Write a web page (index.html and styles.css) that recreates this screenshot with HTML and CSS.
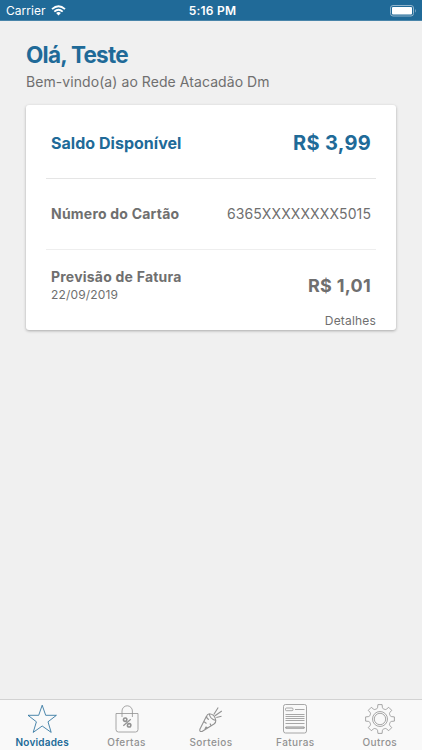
FILE: index.html
```html
<!DOCTYPE html>
<html lang="pt-BR">
<head>
<meta charset="utf-8">
<title>Rede Atacadão Dm</title>
<link rel="stylesheet" href="styles.css">
</head>
<body>
<header class="status">
  <div class="carrier"><span>Carrier</span>
    <svg width="15" height="11" viewBox="0 0 15 11" fill="none" stroke="#fff" stroke-width="1.9"><path d="M1 4.1Q7.5-1.5 14 4.1M3.3 6.6Q7.5 3 11.7 6.6"/><path d="M5.1 8.1Q7.5 6.1 9.9 8.1L7.5 10.6Z" fill="#fff" stroke="none"/></svg>
  </div>
  <span class="time">5:16 PM</span>
  <svg class="battery" width="27" height="12" viewBox="0 0 27 12"><rect x=".5" y=".5" width="23" height="10.5" rx="2.5" fill="none" stroke="#90b4cc"/><rect x="2" y="2" width="20" height="7.5" rx="1" fill="#fff"/><path d="M25 3.8q1.6 2 0 4z" fill="#90b4cc"/></svg>
</header>
<main>
  <h1>Olá, Teste</h1>
  <p class="welcome">Bem-vindo(a) ao Rede Atacadão Dm</p>
  <section class="card">
    <div class="row balance"><span class="balance-label">Saldo Disponível</span><span class="balance-value">R$ 3,99</span></div>
    <div class="row number"><span class="label">Número do Cartão</span><span class="card-number">6365XXXXXXXX5015</span></div>
    <div class="row invoice">
      <div><div class="label invoice-label">Previsão de Fatura</div><div class="date">22/09/2019</div></div>
      <span class="invoice-value">R$ 1,01</span>
    </div>
    <div class="details">Detalhes</div>
  </section>
</main>
<nav>
  <a class="tab active"><svg width="32" height="32" viewBox="0 0 32 32"><path d="M16.2 2.2L19.7 12.3H30.4L22 18.8L25.2 29.4L16.2 23L7.2 29.4L10.4 18.8L2 12.3H12.7Z"/></svg><span>Novidades</span></a>
  <a class="tab"><svg width="32" height="32" viewBox="0 0 32 32"><path d="M5 10.5h22v16a2.5 2.5 0 0 1-2.5 2.5H7.5a2.5 2.5 0 0 1-2.5-2.5ZM11 14V8a5.2 5.2 0 0 1 10.4 0V14"/><g transform="rotate(8 16 19.5)"><circle cx="13.8" cy="17" r="1.7" stroke-width="1.6"/><circle cx="18.5" cy="22" r="1.7" stroke-width="1.6"/><path d="M19.3 15.8L12.8 23.2" stroke-width="1.2"/></g></svg><span>Ofertas</span></a>
  <a class="tab"><svg width="32" height="32" viewBox="0 0 32 32"><path stroke-width="1.1" d="M14.3 10.8Q12.3 11 11.3 13.6L5 26Q4 29 7 28.5L19 21Q21 19.5 20.8 17.5M14.3 10.8Q14.8 16 20.8 17.5M14.3 10.8Q20 11.3 20.8 17.5M11.6 13Q11.6 16 14 16.5M8.8 18.5L11.5 20.5M9.8 26.6L11 24L13 25M16 22.8L15 20.5M18.8 11.5L23.2 4.5M20 12.8L26.8 8M21.3 14.5L26.5 13.3"/></svg><span>Sorteios</span></a>
  <a class="tab"><svg width="32" height="32" viewBox="0 0 32 32"><rect x="4.5" y="1.5" width="23" height="28.5" rx="2"/><rect x="6.5" y="5" width="7.5" height="2.7" rx="1"/><path d="M16 6.5h9.5M6.5 11.5h19M6.5 13.5h19M6.5 15.5h19M6.5 17.5h19M6.5 20.5h19"/><rect x="6.8" y="24" width="18.4" height="1.2" stroke-width="1"/></svg><span>Faturas</span></a>
  <a class="tab"><svg width="32" height="32" viewBox="-16 -16 32 32"><path d="M-3.4-10.2Q-2.5-10.5-2.4-11.5L-2.1-14.4H2.1L2.4-11.5Q2.5-10.5 3.4-10.2L4.8-9.6Q5.7-9.2 6.5-9.9L8.7-11.7L11.7-8.7L9.9-6.5Q9.2-5.7 9.6-4.8L10.2-3.4Q10.5-2.5 11.5-2.4L14.4-2.1V2.1L11.5 2.4Q10.5 2.5 10.2 3.4L9.6 4.8Q9.2 5.7 9.9 6.5L11.7 8.7L8.7 11.7L6.5 9.9Q5.7 9.2 4.8 9.6L3.4 10.2Q2.5 10.5 2.4 11.5L2.1 14.4H-2.1L-2.4 11.5Q-2.5 10.5-3.4 10.2L-4.8 9.6Q-5.7 9.2-6.5 9.9L-8.7 11.7L-11.7 8.7L-9.9 6.5Q-9.2 5.7-9.6 4.8L-10.2 3.4Q-10.5 2.5-11.5 2.4L-14.4 2.1V-2.1L-11.5-2.4Q-10.5-2.5-10.2-3.4L-9.6-4.8Q-9.2-5.7-9.9-6.5L-11.7-8.7L-8.7-11.7L-6.5-9.9Q-5.7-9.2-4.8-9.6Z"/><circle r="7.5"/><circle r="5.7"/></svg><span>Outros</span></a>
</nav>
</body>
</html>
```
FILE: styles.css
```css
* { box-sizing: border-box; }
body { margin: 0; height: 750px; display: flex; flex-direction: column; background: #f0f0f0; color: #6f6f6f; font-family: Inter, "Liberation Sans", sans-serif; overflow: hidden; white-space: nowrap; }
.status { height: 21px; flex: none; background: #206a98; border-bottom: 1px solid #4985aa; color: #fff; display: grid; grid-template-columns: 1fr auto 1fr; align-items: center; padding: 1px 5px 0 6px; line-height: 18px; }
.carrier { display: flex; align-items: center; gap: 5px; font-size: 12px; letter-spacing: .05px; }
.time { font-size: 12px; font-weight: 600; letter-spacing: .25px; padding-left: 2px; }
.battery { justify-self: end; }
main { flex: 1; padding: 20px 26px 0; }
h1 { margin: 0; font-size: 22.5px; line-height: 28px; font-weight: 700; letter-spacing: -.75px; color: #206a98; }
.welcome { margin: 2px 0 0; font-size: 14px; line-height: 22px; letter-spacing: .07px; }
.card { margin-top: 12px; height: 225px; padding: 0 20px; background: #fff; border-radius: 3px; box-shadow: 0 1px 3px rgba(0,0,0,.3); }
.row { display: flex; justify-content: space-between; align-items: center; padding: 0 5px; }
.balance { height: 74px; padding-top: 3px; border-bottom: 1px solid #e5e5e5; color: #206a98; }
.balance-label { font-size: 16px; font-weight: 700; letter-spacing: .03px; }
.balance-value { font-size: 20px; font-weight: 700; letter-spacing: .3px; }
.number { height: 71px; border-bottom: 1px solid #eee; padding-bottom: 1px; }
.label { font-size: 14px; font-weight: 700; letter-spacing: .22px; }
.card-number { font-size: 14px; letter-spacing: .1px; padding-bottom: 1px; }
.invoice { height: 60px; padding-top: 11px; }
.invoice-label { line-height: 18px; }
.date { font-size: 12px; line-height: 18px; letter-spacing: .15px; }
.invoice-value { font-size: 18px; font-weight: 700; letter-spacing: .3px; }
.details { text-align: right; font-size: 12px; line-height: 22px; letter-spacing: .18px; }
nav { height: 51px; flex: none; display: grid; grid-template-columns: repeat(5, 1fr); background: #f9f9f9; border-top: 1px solid #d2d2d2; }
.tab { display: flex; flex-direction: column; align-items: center; padding-top: 3px; color: #929292; font-size: 10px; font-weight: 500; line-height: 14px; letter-spacing: .42px; }
.tab svg { fill: none; stroke: currentColor; stroke-width: .8; stroke-linejoin: round; flex: none; }
.active { color: #206a98; }
.active span { font-weight: 600; letter-spacing: .2px; }
```
